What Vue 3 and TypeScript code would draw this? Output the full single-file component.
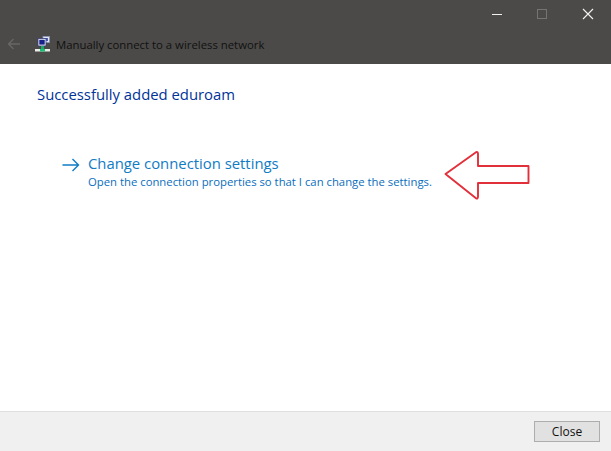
<script setup lang="ts">
const title = "Manually connect to a wireless network";
</script>

<template>
	<div class="wizard">
		<header class="top">
			<div class="caption">
				<svg class="cap-btn" width="12" height="12" viewBox="0 0 12 12"><path d="M1 6.500h10" stroke="#f2f2f2" stroke-width="1" /></svg>
				<svg class="cap-btn" width="12" height="12" viewBox="0 0 12 12"><rect x="1.500" y="1.500" width="9" height="9" fill="none" stroke="#757473" /></svg>
				<svg class="cap-btn cap-close" width="12" height="12" viewBox="0 0 12 12"><path d="M1 1l10 10M11 1L1 11" stroke="#f4f4f4" stroke-width="1.100" /></svg>
			</div>
			<div class="nav">
				<svg class="back" width="14" height="12" viewBox="0 0 14 12"><path d="M13 6H1.500M6.500 1L1.500 6l5 5" fill="none" stroke="#686766" stroke-width="1.300" /></svg>
				<svg class="net" width="16" height="16" viewBox="0 0 16 16">
					<rect x="8" y="0.500" width="6.500" height="6" fill="#dfe6f5" stroke="#8c95b8" stroke-width="0.800" />
					<rect x="9.500" y="2" width="3.500" height="3" fill="#4b62b5" />
					<rect x="3" y="2.500" width="8" height="7.500" fill="#e6e9f4" stroke="#3a3f78" stroke-width="0.800" />
					<rect x="4.300" y="3.800" width="5.400" height="4.800" fill="#18208c" />
					<rect x="6" y="10" width="3" height="3" fill="#17a86a" />
					<rect x="0" y="13" width="15" height="2.500" fill="#e9ece8" />
					<rect x="5" y="13" width="5" height="2.500" fill="#1fbf73" />
				</svg>
				<span class="title">{{ title }}</span>
			</div>
		</header>

		<main class="body">
			<h1 class="heading">Successfully added eduroam</h1>
			<div class="link">
				<svg class="link-arrow" width="18" height="14" viewBox="0 0 18 14"><path d="M0.500 7H16.500M10.500 1l6 6-6 6" fill="none" stroke="#0f7cc4" stroke-width="1.400" /></svg>
				<div class="link-text">
					<div class="link-title">Change connection settings</div>
					<div class="link-sub">Open the connection properties so that I can change the settings.</div>
				</div>
			</div>
			<svg class="pointer" width="86" height="50" viewBox="0 0 86 50">
				<path d="M1.500 23L32 1.200Q34 0.500 34 3V15H84.500V32H34V45.500Q34 48 32 47.300Z" fill="#fff" stroke="#e2303a" stroke-width="1.900" stroke-linejoin="round" />
			</svg>
		</main>

		<footer class="bottom">
			<button class="close" type="button">Close</button>
		</footer>
	</div>
</template>

<style scoped>
.wizard {
	width: 611px;
	height: 451px;
	display: flex;
	flex-direction: column;
	background: #fff;
	font-family: "Open Sans", "Noto Sans", sans-serif;
	overflow: hidden;
}

.top {
	height: 64px;
	background: #4b4a48;
	display: flex;
	flex-direction: column;
	justify-content: space-between;
}

.caption {
	display: flex;
	justify-content: flex-end;
	gap: 33px;
	padding: 8px 17px 0 0;
}

.cap-btn {
	display: block;
}

.cap-close {
	margin-left: 1px;
}

.nav {
	display: flex;
	align-items: center;
	padding: 0 0 10px 7px;
	height: 20px;
}

.net {
	margin-left: 14px;
	margin-right: 5px;
}

.title {
	font-size: 11.350px;
	color: #111;
	white-space: nowrap;
}

.body {
	position: relative;
	flex: 1;
	padding: 19px 0 0 37px;
}

.heading {
	margin: 0;
	font-size: 14.850px;
	font-weight: 400;
	line-height: 22px;
	color: #003399;
}

.link {
	display: flex;
	align-items: flex-start;
	gap: 8px;
	margin: 47px 0 0 25px;
}

.link-arrow {
	margin-top: 6px;
}

.link-title {
	font-size: 14.850px;
	line-height: 22px;
	color: #0f7cc4;
}

.link-sub {
	font-size: 11.320px;
	line-height: 15px;
	color: #0a6ebd;
	white-space: nowrap;
}

.pointer {
	position: absolute;
	left: 444px;
	top: 87px;
}

.bottom {
	height: 40px;
	box-sizing: border-box;
	background: #f0f0f0;
	border-top: 1px solid #dfdfdf;
	display: flex;
	justify-content: flex-end;
	align-items: center;
	padding-right: 11px;
}

.close {
	width: 66px;
	height: 21px;
	padding: 0;
	background: #e1e1e1;
	border: 1px solid #adadad;
	font-family: inherit;
	font-size: 12px;
	color: #111;
}
</style>
